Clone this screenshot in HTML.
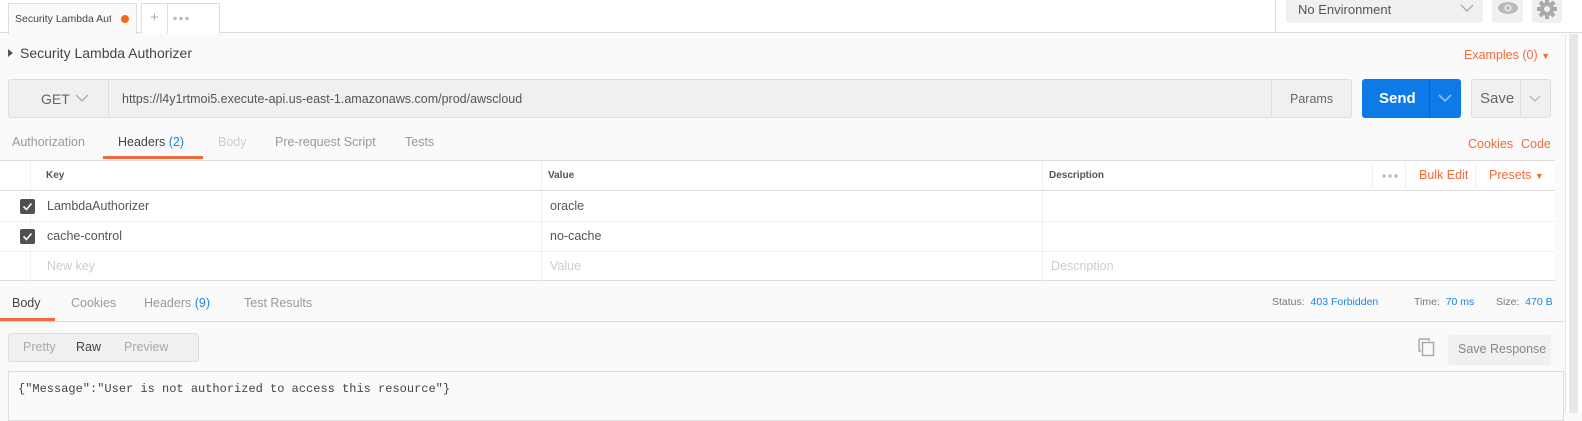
<!DOCTYPE html>
<html><head><meta charset="utf-8"><style>
*{box-sizing:border-box;margin:0;padding:0}
body{width:1582px;height:413px;overflow:hidden;background:#fafafa;font-family:"Liberation Sans",sans-serif;font-size:12px;color:#505050;position:relative}
.a{position:absolute}
.o{color:#f26b3a}
.b{color:#1a84e0}
</style></head><body>
<!-- top bar -->
<div class="a" style="left:0;top:0;width:1582px;height:33px;background:#fff;border-bottom:1px solid #ddd"></div>
<div class="a" style="left:8px;top:3px;width:129px;height:31px;background:#fafafa;border:1px solid #ddd;border-bottom:none"></div>
<div class="a" style="left:15px;top:13px;width:96px;overflow:hidden;white-space:nowrap;font-size:10.5px;color:#444">Security Lambda Authorizer</div>
<div class="a" style="left:121px;top:15px;width:8px;height:8px;border-radius:50%;background:#f26b1d"></div>
<div class="a" style="left:141px;top:3px;width:79px;height:30px;border:1px solid #ddd;border-bottom:none;background:#fff"></div>
<div class="a" style="left:167px;top:3px;width:1px;height:30px;background:#ddd"></div>
<div class="a" style="left:150px;top:9px;font-size:15px;color:#aaa">+</div>
<svg class="a" style="left:173px;top:16px" width="16" height="5"><circle cx="2" cy="2.5" r="1.8" fill="#bbb"/><circle cx="8" cy="2.5" r="1.8" fill="#bbb"/><circle cx="14" cy="2.5" r="1.8" fill="#bbb"/></svg>
<div class="a" style="left:1275px;top:0;width:1px;height:33px;background:#ddd"></div>
<div class="a" style="left:1286px;top:0;width:197px;height:23px;background:#f0f0f0;border-radius:0 0 3px 3px;font-size:13px;padding:2px 0 0 12px;color:#555">No Environment</div>
<svg class="a" style="left:1460px;top:3px" width="14" height="10"><path d="M1 2l6 6 6-6" fill="none" stroke="#aaa" stroke-width="1.3"/></svg>
<div class="a" style="left:1492px;top:0;width:31px;height:23px;background:#f0f0f0;border-radius:0 0 3px 3px"></div>
<svg class="a" style="left:1497px;top:1px" width="22" height="14"><ellipse cx="11" cy="7" rx="10" ry="6" fill="#bbb"/><circle cx="11" cy="7" r="3.5" fill="#f0f0f0"/><circle cx="11" cy="7" r="2" fill="#bbb"/></svg>
<div class="a" style="left:1532px;top:0;width:30px;height:23px;background:#f0f0f0;border-radius:0 0 3px 3px"></div>
<svg class="a" style="left:1536px;top:-2px" width="22" height="22" viewBox="0 0 22 22"><g fill="#aaa"><circle cx="11" cy="11" r="7"/><rect x="9" y="1" width="4" height="20"/><rect x="1" y="9" width="20" height="4"/><rect x="9" y="1" width="4" height="20" transform="rotate(45 11 11)"/><rect x="9" y="1" width="4" height="20" transform="rotate(-45 11 11)"/></g><circle cx="11" cy="11" r="3" fill="#f0f0f0"/></svg>
<!-- scrollbar -->
<div class="a" style="left:1565px;top:34px;width:17px;height:379px;background:#fff;border-left:1px solid #e5e5e5"></div>
<div class="a" style="left:1569px;top:34px;width:9px;height:379px;background:#e8e8e8"></div>
<!-- title -->
<svg class="a" style="left:8px;top:49px" width="6" height="8"><path d="M0 0l5 4-5 4z" fill="#555"/></svg>
<div class="a" style="left:20px;top:45px;font-size:14px;color:#444">Security Lambda Authorizer</div>
<div class="a o" style="left:1464px;top:48px;font-size:12.5px">Examples (0) <span style="font-size:9px">▼</span></div>
<!-- url bar -->
<div class="a" style="left:8px;top:79px;width:1344px;height:39px;background:#f0f0f0;border:1px solid #ddd;border-radius:3px"></div>
<div class="a" style="left:108px;top:80px;width:1px;height:37px;background:#ddd"></div>
<div class="a" style="left:1271px;top:80px;width:1px;height:37px;background:#ddd"></div>
<div class="a" style="left:41px;top:91px;font-size:14px;color:#666">GET</div>
<svg class="a" style="left:75px;top:94px" width="14" height="9"><path d="M1 1l6 6 6-6" fill="none" stroke="#aaa" stroke-width="1.3"/></svg>
<div class="a" style="left:122px;top:92px;font-size:12.5px;color:#555">https://l4y1rtmoi5.execute-api.us-east-1.amazonaws.com/prod/awscloud</div>
<div class="a" style="left:1290px;top:92px;font-size:12.5px;color:#666">Params</div>
<div class="a" style="left:1362px;top:79px;width:99px;height:39px;background:#0e7ae8;border-radius:3px"></div>
<div class="a" style="left:1429px;top:79px;width:1px;height:39px;background:#0a63c0"></div>
<div class="a" style="left:1379px;top:90px;font-size:15px;font-weight:bold;color:#fff">Send</div>
<svg class="a" style="left:1438px;top:94px" width="14" height="9"><path d="M1 1l6 6 6-6" fill="none" stroke="#9cc9f5" stroke-width="1.5"/></svg>
<div class="a" style="left:1471px;top:79px;width:80px;height:39px;background:#f0f0f0;border:1px solid #ddd;border-radius:3px"></div>
<div class="a" style="left:1520px;top:80px;width:1px;height:37px;background:#ddd"></div>
<div class="a" style="left:1480px;top:90px;font-size:15px;color:#666">Save</div>
<svg class="a" style="left:1529px;top:95px" width="12" height="8"><path d="M1 1l5 5 5-5" fill="none" stroke="#aaa" stroke-width="1"/></svg>
<!-- request tabs -->
<div class="a" style="left:12px;top:135px;font-size:12.5px;color:#999">Authorization</div>
<div class="a" style="left:118px;top:135px;font-size:12.5px;color:#444">Headers <span class="b">(2)</span></div>
<div class="a" style="left:103px;top:156px;width:100px;height:3px;background:#f26b3a"></div>
<div class="a" style="left:218px;top:135px;font-size:12.5px;color:#ccc">Body</div>
<div class="a" style="left:275px;top:135px;font-size:12.5px;color:#999">Pre-request Script</div>
<div class="a" style="left:405px;top:135px;font-size:12.5px;color:#999">Tests</div>
<div class="a o" style="left:1468px;top:137px;font-size:12.5px">Cookies</div>
<div class="a o" style="left:1521px;top:137px;font-size:12.5px">Code</div>
<!-- table -->
<div class="a" style="left:0;top:160px;width:1555px;height:121px;background:#fff;border-top:1px solid #ddd;border-bottom:1px solid #ddd"></div>
<div class="a" style="left:0;top:190px;width:1555px;height:1px;background:#ddd"></div>
<div class="a" style="left:0;top:221px;width:1555px;height:1px;background:#f0f0f0"></div>
<div class="a" style="left:0;top:251px;width:1555px;height:1px;background:#f0f0f0"></div>
<div class="a" style="left:30px;top:161px;width:1px;height:120px;background:#f0f0f0"></div>
<div class="a" style="left:541px;top:161px;width:1px;height:120px;background:#f0f0f0"></div>
<div class="a" style="left:1042px;top:161px;width:1px;height:120px;background:#f0f0f0"></div>
<div class="a" style="left:1372px;top:163px;width:1px;height:25px;background:#eee"></div>
<div class="a" style="left:1405px;top:163px;width:1px;height:25px;background:#eee"></div>
<div class="a" style="left:1475px;top:163px;width:1px;height:25px;background:#eee"></div>
<div class="a" style="left:46px;top:170px;font-size:10px;font-weight:bold;color:#555">Key</div>
<div class="a" style="left:548px;top:170px;font-size:10px;font-weight:bold;color:#555">Value</div>
<div class="a" style="left:1049px;top:170px;font-size:10px;font-weight:bold;color:#555">Description</div>
<svg class="a" style="left:1382px;top:174px" width="16" height="4"><circle cx="2" cy="2" r="1.7" fill="#bbb"/><circle cx="8" cy="2" r="1.7" fill="#bbb"/><circle cx="14" cy="2" r="1.7" fill="#bbb"/></svg>
<div class="a o" style="left:1419px;top:168px;font-size:12.5px">Bulk Edit</div>
<div class="a o" style="left:1489px;top:168px;font-size:12.5px">Presets <span style="font-size:9px">▼</span></div>
<div class="a" style="left:20px;top:199px;width:15px;height:15px;background:#505050;border-radius:2px"></div>
<svg class="a" style="left:20px;top:199px" width="15" height="15"><path d="M3.5 7.5l3 3 5-6" fill="none" stroke="#fff" stroke-width="1.6"/></svg>
<div class="a" style="left:20px;top:229px;width:15px;height:15px;background:#505050;border-radius:2px"></div>
<svg class="a" style="left:20px;top:229px" width="15" height="15"><path d="M3.5 7.5l3 3 5-6" fill="none" stroke="#fff" stroke-width="1.6"/></svg>
<div class="a" style="left:47px;top:199px;font-size:12.5px;color:#555">LambdaAuthorizer</div>
<div class="a" style="left:550px;top:199px;font-size:12.5px;color:#555">oracle</div>
<div class="a" style="left:47px;top:229px;font-size:12.5px;color:#555">cache-control</div>
<div class="a" style="left:550px;top:229px;font-size:12.5px;color:#555">no-cache</div>
<div class="a" style="left:47px;top:259px;font-size:12.5px;color:#ccc">New key</div>
<div class="a" style="left:550px;top:259px;font-size:12.5px;color:#ccc">Value</div>
<div class="a" style="left:1051px;top:259px;font-size:12.5px;color:#ccc">Description</div>
<!-- response tabs -->
<div class="a" style="left:12px;top:296px;font-size:12.5px;color:#444">Body</div>
<div class="a" style="left:0;top:318px;width:55px;height:3px;background:#f26b3a"></div>
<div class="a" style="left:0;top:321px;width:1565px;height:1px;background:#ddd"></div>
<div class="a" style="left:71px;top:296px;font-size:12.5px;color:#999">Cookies</div>
<div class="a" style="left:144px;top:296px;font-size:12.5px;color:#999">Headers <span class="b">(9)</span></div>
<div class="a" style="left:244px;top:296px;font-size:12.5px;color:#999">Test Results</div>
<div class="a" style="left:1272px;top:296px;font-size:10.5px;color:#777">Status: <span class="b">&nbsp;403 Forbidden</span></div>
<div class="a" style="left:1414px;top:296px;font-size:10.5px;color:#777">Time: <span class="b">&nbsp;70 ms</span></div>
<div class="a" style="left:1496px;top:296px;font-size:10.5px;color:#777">Size: <span class="b">&nbsp;470 B</span></div>
<div class="a" style="left:8px;top:333px;width:191px;height:29px;background:#f0f0f0;border:1px solid #ddd;border-radius:3px"></div>
<div class="a" style="left:23px;top:340px;font-size:12.5px;color:#aaa">Pretty</div>
<div class="a" style="left:76px;top:340px;font-size:12.5px;color:#444">Raw</div>
<div class="a" style="left:124px;top:340px;font-size:12.5px;color:#aaa">Preview</div>
<svg class="a" style="left:1418px;top:338px" width="18" height="20"><path d="M1 1h10v2M1 1v12h2" fill="none" stroke="#aaa" stroke-width="1.5"/><rect x="4.5" y="4.5" width="11" height="13" fill="none" stroke="#aaa" stroke-width="1.5"/></svg>
<div class="a" style="left:1448px;top:335px;width:103px;height:30px;background:#f0f0f0;border-radius:3px;font-size:12.5px;color:#888;padding:7px 0 0 10px">Save Response</div>
<div class="a" style="left:8px;top:371px;width:1556px;height:50px;background:#fafafa;border:1px solid #ddd"></div>
<div class="a" style="left:18px;top:382px;font-family:'Liberation Mono',monospace;font-size:12px;color:#444">{"Message":"User is not authorized to access this resource"}</div>
</body></html>
